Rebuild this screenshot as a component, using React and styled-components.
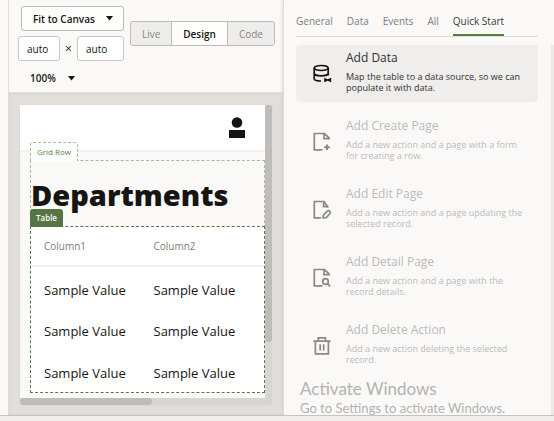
import React, { useState } from "react";
import styled, { createGlobalStyle } from "styled-components";

const Global = createGlobalStyle`
  *, *::before, *::after { box-sizing: border-box; }
  body {
    margin: 0;
    background: #faf9f8;
    color: #161513;
    font-family: "Open Sans", "Noto Sans", sans-serif;
    font-size: 10px;
    line-height: 12px;
  }
  button, input, select { font: inherit; color: inherit; margin: 0; }
  h1, h2, p, ul { margin: 0; padding: 0; }
`;

const Page = styled.div`
  min-height: 100vh;
  display: flex;
  flex-direction: column;
`;

const Workspace = styled.main`
  flex: 1;
  display: grid;
  grid-template-columns: 8px minmax(0, 275fr) minmax(0, 271fr);
`;

const StatusBar = styled.footer`
  height: 6px;
  background: #f0efee;
  border-top: 1px solid #c4c3c1;
`;

const Editor = styled.section`
  display: flex;
  flex-direction: column;
  border-left: 1px solid #e0dedc;
`;

const Toolbar = styled.div`
  height: 93px;
  padding: 6px 8px 0 9px;
  display: flex;
  justify-content: space-between;
  align-items: flex-start;
  border-bottom: 1px solid #e3e1df;
`;

const SizeControls = styled.div`
  display: flex;
  flex-direction: column;
  gap: 5px;
`;

const SelectWrap = styled.div`
  position: relative;
  width: ${(p) => (p.$plain ? "66px" : "103px")};
  margin-left: ${(p) => (p.$plain ? "0" : "3px")};
`;

const Select = styled.select`
  appearance: none;
  width: 100%;
  height: ${(p) => (p.$plain ? "24px" : "25px")};
  padding: 0 0 0 11px;
  border: 1px solid ${(p) => (p.$plain ? "transparent" : "#bdbbb9")};
  border-radius: 3px;
  background: ${(p) => (p.$plain ? "transparent" : "#fdfdfc")};
  font-weight: 600;
`;

const Caret = styled.svg`
  position: absolute;
  right: ${(p) => (p.$plain ? "9px" : "11px")};
  top: 10px;
  width: 7px;
  height: 5px;
  pointer-events: none;
`;

const Dimensions = styled.div`
  display: flex;
  align-items: center;
  justify-content: space-between;
  width: 106px;
  font-size: 12px;
`;

const SizeInput = styled.input`
  width: ${(p) => (p.$wide ? "47px" : "42px")};
  height: 25px;
  padding: 0 8px;
  border: 1px solid #c9c7c5;
  border-radius: 3px;
  background: #fff;
  font-size: 10px;
`;

const ModeSwitch = styled.div`
  display: flex;
  margin-top: 15px;
  border: 1px solid #bdbbb9;
  border-radius: 3px;
  overflow: hidden;
`;

const ModeButton = styled.button`
  height: 23px;
  padding: 0 11px;
  border: 0;
  background: ${(p) => (p.$active ? "#fdfdfc" : "#eeedeb")};
  color: ${(p) => (p.$active ? "#161513" : "#86847f")};
  font-weight: ${(p) => (p.$active ? 600 : 400)};
  & + & { border-left: 1px solid #bdbbb9; }
`;

const Canvas = styled.div`
  flex: 1;
  padding: 12px 11px 10px 11px;
  background: #e2dfda;
  box-shadow: inset 0 0 3px #cfccc7;
`;

const Device = styled.div`
  display: grid;
  grid-template-columns: minmax(0, 1fr) 7px;
  grid-template-rows: auto 7px;
  background: #d8d6d2;
  border-radius: 2px 4px 4px 4px;
  box-shadow: 0 0 1px #bbb8b4;
`;

const Screen = styled.div`
  background: #faf9f8;
  padding-bottom: 5px;
`;

const Scrollbar = styled.div`
  display: flex;
  flex-direction: ${(p) => (p.$vertical ? "column" : "row")};
`;

const Thumb = styled.div`
  flex: 0 0 ${(p) => p.$size};
  border-radius: 4px;
  background: #bfbcb9;
`;

const AppHeader = styled.header`
  height: 47px;
  padding: 12px 20px 0 0;
  display: flex;
  justify-content: flex-end;
  background: #fff;
  border-bottom: 2px solid #f1f0ef;
`;

const GridRow = styled.div`
  position: relative;
  margin: 8px 0 0 10px;
  padding-top: 15px;
  border: 1px dashed #a3bf94;
  border-bottom: 0;
`;

const RowTag = styled.span`
  position: absolute;
  left: -1px;
  top: -19px;
  height: 19px;
  padding: 3px 6px 0;
  border: 1px dashed #a3bf94;
  border-bottom: 0;
  border-radius: 3px 3px 0 0;
  background: #fff;
  color: #5d7f4c;
  font-size: 8px;
`;

const Heading = styled.h1`
  height: 50px;
  font-size: 29px;
  line-height: 38px;
  font-weight: 800;
`;

const TableFrame = styled.div`
  position: relative;
  margin: 0 -1px;
  border: 1px dashed #567847;
  background: #fff;
`;

const TableTag = styled.span`
  position: absolute;
  left: -1px;
  top: -18px;
  height: 18px;
  padding: 3px 6px 0;
  border-radius: 3px 3px 0 0;
  background: #557545;
  color: #fff;
  font-size: 8px;
  font-weight: 600;
`;

const Table = styled.table`
  width: 100%;
  table-layout: fixed;
  border-collapse: collapse;
  text-align: left;
`;

const HeadCell = styled.th`
  height: 39px;
  padding: 0 0 0 13px;
  border-bottom: 2px solid #f1f0ef;
  color: #7f7d79;
  font-weight: 400;
  width: ${(p) => (p.$first ? "47%" : "auto")};
`;

const Cell = styled.td`
  height: 42px;
  padding: 4px 0 0 13px;
  font-size: 13px;
  line-height: 18px;
`;

const Inspector = styled.aside`
  display: flex;
  border-left: 1px solid #e0dedc;
  box-shadow: 0 0 4px #d5d2ce;
  background: #faf9f8;
  padding: 9px 0 0 12px;
`;

const InspectorBody = styled.div`
  position: relative;
  flex: 1;
  min-width: 0;
`;

const InspectorScroll = styled.div`
  width: 3px;
  margin: 36px 0 0 13px;
  background: #eceae8;
`;

const Tabs = styled.nav`
  display: flex;
  gap: 14px;
  height: 28px;
  border-bottom: 1px solid #dfddda;
`;

const Tab = styled.button`
  height: 27px;
  padding: 0 0 1px;
  border: 0;
  border-bottom: 2px solid ${(p) => (p.$active ? "#4f7d3d" : "transparent")};
  background: none;
  color: ${(p) => (p.$active ? "#3a3835" : "#7f7d79")};
  white-space: nowrap;
`;

const Actions = styled.ul`
  display: flex;
  flex-direction: column;
  gap: 11px;
  padding-top: 8px;
  list-style: none;
`;

const Action = styled.button`
  width: 100%;
  height: 57px;
  padding: 5px 8px 0 17px;
  display: grid;
  grid-template-columns: 18px minmax(0, 1fr);
  column-gap: 15px;
  align-items: start;
  border: 0;
  border-radius: 4px;
  background: ${(p) => (p.$active ? "#efeeec" : "transparent")};
  color: ${(p) => (p.$active ? "#33312e" : "#bcbab8")};
  text-align: left;
`;

const ActionIcon = styled.svg`
  width: 20px;
  height: 20px;
  margin-top: 14px;
  color: ${(p) => (p.$active ? "#161513" : "#8a8987")};
  fill: none;
  stroke: currentColor;
  stroke-width: 1.7;
`;

const ActionTitle = styled.span`
  display: block;
  font-size: 12px;
  line-height: 16px;
`;

const ActionText = styled.span`
  display: block;
  margin-top: 5px;
  font-size: 9px;
  line-height: 11px;
`;

const Watermark = styled.div`
  position: absolute;
  left: 4px;
  bottom: 0;
  height: 36px;
  overflow: hidden;
  color: #b4b2b0;
  font-family: Lato, sans-serif;
  font-size: 13px;
  line-height: 18px;
  white-space: nowrap;
  pointer-events: none;
`;

const WatermarkTitle = styled.p`
  font-size: 17px;
  line-height: 20px;
`;

const page = <path d="M16.2 7.500V6.200L11.500 1.500H1.300v16.400H9.500M11 1.500v5.200h5.200" />;

const icons = {
  data: (
    <>
      <ellipse cx="8.2" cy="4" rx="7" ry="2.500" />
      <path d="M1.200 4v10.700c0 1.400 2.800 2.300 6.800 2.300M15.200 4v7.500M1.200 9.200c0 1.500 3.100 2.700 7 2.700s7-1.200 7-2.700" />
      <path d="M11.200 13.800l3.500 1.500 3.500-1.500v4.400l-3.500-1.500-3.500 1.500z" fill="currentColor" stroke="none" />
    </>
  ),
  create: <>{page}<path d="M14 12.500v5.500M11.200 15.200h5.600" strokeWidth="2" /></>,
  edit: (
    <>
      <path d="M15.300 7.500L11 1.500H1.300v16.400H8M10.600 1.500v5.200h4.700" />
      <path d="M10 17.900l.4-2.700 4-4.200c1.600-1.100 3.700.8 2.700 2.500l-4 4.200z" />
    </>
  ),
  detail: <>{page}<circle cx="12.500" cy="13.500" r="2.800" /><path d="M14.500 15.600l2.700 2.700" /></>,
  remove: <path d="M.3 5.100h17.200M5.300 5V1.800h7.200V5M2.400 5.200v12.600h13V5.200M7.200 8.200v6.400M10.700 8.200v6.400" />,
};

const actions = [
  { icon: "data", title: "Add Data", text: "Map the table to a data source, so we can populate it with data." },
  { icon: "create", title: "Add Create Page", text: "Add a new action and a page with a form for creating a row." },
  { icon: "edit", title: "Add Edit Page", text: "Add a new action and a page updating the selected record." },
  { icon: "detail", title: "Add Detail Page", text: "Add a new action and a page with the record details." },
  { icon: "remove", title: "Add Delete Action", text: "Add a new action deleting the selected record." },
];

function Dropdown({ label, value, plain }) {
  return (
    <SelectWrap $plain={plain}>
      <Select $plain={plain} aria-label={label} defaultValue={value}>
        <option>{value}</option>
      </Select>
      <Caret $plain={plain} viewBox="0 0 7 5" aria-hidden="true">
        <path d="M0 0h7L3.500 4.500z" fill="#161513" />
      </Caret>
    </SelectWrap>
  );
}

export default function App() {
  const [mode, setMode] = useState("Design");
  const [tab, setTab] = useState("Quick Start");
  return (
    <>
      <Global />
      <Page>
        <Workspace>
          <div />
          <Editor>
            <Toolbar>
              <SizeControls>
                <Dropdown label="Canvas size" value="Fit to Canvas" />
                <Dimensions>
                  <SizeInput aria-label="Width" defaultValue="auto" />
                  <span>×</span>
                  <SizeInput $wide aria-label="Height" defaultValue="auto" />
                </Dimensions>
                <Dropdown plain label="Zoom" value="100%" />
              </SizeControls>
              <ModeSwitch role="group" aria-label="View mode">
                {["Live", "Design", "Code"].map((m) => (
                  <ModeButton key={m} $active={m === mode} aria-pressed={m === mode} onClick={() => setMode(m)}>
                    {m}
                  </ModeButton>
                ))}
              </ModeSwitch>
            </Toolbar>
            <Canvas>
              <Device>
                <Screen>
                  <AppHeader>
                    <svg width="16" height="22" viewBox="0 0 16 22" fill="#161513" role="img" aria-label="User">
                      <circle cx="8" cy="5.500" r="5.300" />
                      <path d="M0 13h16v8H0z" />
                    </svg>
                  </AppHeader>
                  <GridRow>
                    <RowTag>Grid Row</RowTag>
                    <Heading>Departments</Heading>
                    <TableFrame>
                      <TableTag>Table</TableTag>
                      <Table>
                        <thead>
                          <tr>
                            <HeadCell $first>Column1</HeadCell>
                            <HeadCell>Column2</HeadCell>
                          </tr>
                        </thead>
                        <tbody>
                          {[1, 2, 3].map((r) => (
                            <tr key={r}>
                              <Cell>Sample Value</Cell>
                              <Cell>Sample Value</Cell>
                            </tr>
                          ))}
                        </tbody>
                      </Table>
                    </TableFrame>
                  </GridRow>
                </Screen>
                <Scrollbar $vertical>
                  <Thumb $size="81%" />
                </Scrollbar>
                <Scrollbar>
                  <Thumb $size="54%" />
                </Scrollbar>
              </Device>
            </Canvas>
          </Editor>
          <Inspector>
            <InspectorBody>
              <Tabs>
                {["General", "Data", "Events", "All", "Quick Start"].map((t) => (
                  <Tab key={t} $active={t === tab} onClick={() => setTab(t)}>
                    {t}
                  </Tab>
                ))}
              </Tabs>
              <Actions>
                {actions.map(({ icon, title, text }, i) => (
                  <li key={icon}>
                    <Action $active={i === 0} disabled={i > 0}>
                      <ActionIcon $active={i === 0} viewBox="0 0 20 20" aria-hidden="true">
                        {icons[icon]}
                      </ActionIcon>
                      <span>
                        <ActionTitle>{title}</ActionTitle>
                        <ActionText>{text}</ActionText>
                      </span>
                    </Action>
                  </li>
                ))}
              </Actions>
              <Watermark>
                <WatermarkTitle>Activate Windows</WatermarkTitle>
                <p>Go to Settings to activate Windows.</p>
              </Watermark>
            </InspectorBody>
            <InspectorScroll />
          </Inspector>
        </Workspace>
        <StatusBar />
      </Page>
    </>
  );
}
